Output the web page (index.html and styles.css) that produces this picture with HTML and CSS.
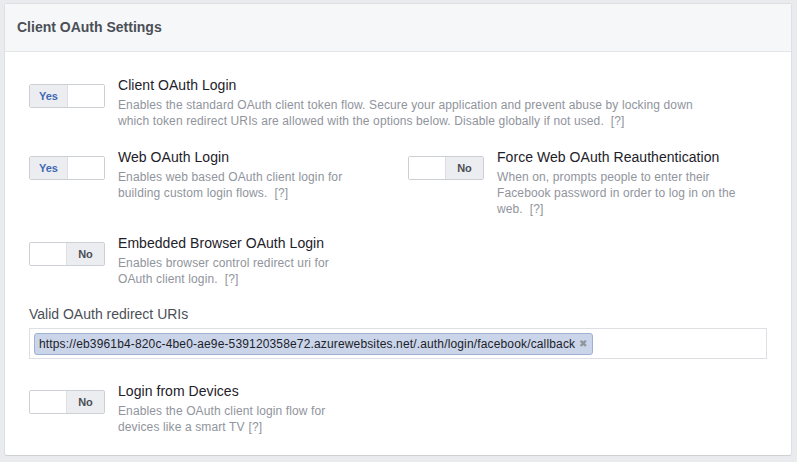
FILE: index.html
```html
<!DOCTYPE html>
<html>
<head>
<meta charset="utf-8">
<link rel="stylesheet" href="styles.css">
</head>
<body>
<div class="card">
  <div class="card-header">Client OAuth Settings</div>
  <div class="card-body">
    <div class="setting">
      <div class="toggle on"><span class="half label">Yes</span><span class="half blank"></span></div>
      <div class="info wide">
        <div class="title">Client OAuth Login</div>
        <div class="desc">Enables the standard OAuth client token flow. Secure your application and prevent abuse by locking down which token redirect URIs are allowed with the options below. Disable globally if not used.<span class="help">[?]</span></div>
      </div>
    </div>

    <div class="pair">
      <div class="setting">
        <div class="toggle on"><span class="half label">Yes</span><span class="half blank"></span></div>
        <div class="info">
          <div class="title">Web OAuth Login</div>
          <div class="desc">Enables web based OAuth client login for building custom login flows.<span class="help">[?]</span></div>
        </div>
      </div>
      <div class="setting">
        <div class="toggle off"><span class="half blank"></span><span class="half label">No</span></div>
        <div class="info">
          <div class="title">Force Web OAuth Reauthentication</div>
          <div class="desc">When on, prompts people to enter their Facebook password in order to log in on the web.<span class="help">[?]</span></div>
        </div>
      </div>
    </div>

    <div class="setting">
      <div class="toggle off"><span class="half blank"></span><span class="half label">No</span></div>
      <div class="info">
        <div class="title">Embedded Browser OAuth Login</div>
        <div class="desc">Enables browser control redirect uri for OAuth client login.<span class="help">[?]</span></div>
      </div>
    </div>

    <div class="field">
      <div class="field-label">Valid OAuth redirect URIs</div>
      <div class="token-input">
        <span class="token">https://eb3961b4-820c-4be0-ae9e-539120358e72.azurewebsites.net/.auth/login/facebook/callback<span class="token-x">&#x2716;</span></span>
      </div>
    </div>

    <div class="setting">
      <div class="toggle off"><span class="half blank"></span><span class="half label">No</span></div>
      <div class="info">
        <div class="title">Login from Devices</div>
        <div class="desc">Enables the OAuth client login flow for devices like a smart TV<span class="help short">[?]</span></div>
      </div>
    </div>
  </div>
</div>
</body>
</html>
```

FILE: styles.css
```css
html, body {
  margin: 0;
  padding: 0;
  background: #e9ebee;
}
body {
  padding: 3px 5px 0 4px;
  font-family: "Liberation Sans", Arial, Helvetica, sans-serif;
}
.card {
  background: #fff;
  border: 1px solid #dddfe2;
  border-bottom-color: #cfd1d5;
  border-radius: 3px;
  height: 451px;
}
.card-header {
  background: #f6f7f9;
  border-bottom: 1px solid #e5e5e5;
  height: 47px;
  line-height: 47px;
  padding: 0 12px;
  font-size: 14px;
  font-weight: bold;
  color: #4b4f56;
}
.card-body {
  padding: 24px 24px 20px 24px;
  display: flex;
  flex-direction: column;
}
.setting {
  display: flex;
  align-items: flex-start;
}
.pair {
  display: grid;
  grid-template-columns: 379px 1fr;
  margin-top: 19px;
}
.pair + .setting {
  margin-top: 17px;
}
.toggle {
  display: flex;
  width: 74px;
  height: 22px;
  border: 1px solid #ccd0d5;
  border-radius: 2px;
  margin-top: 8px;
  margin-right: 13px;
  flex: none;
  overflow: hidden;
}
.half {
  width: 37px;
  height: 22px;
  line-height: 22px;
  text-align: center;
  font-size: 11px;
  font-weight: bold;
}
.half.label {
  background: #ebedf0;
  width: 38px;
}
.half.blank {
  background: #fff;
}
.toggle.on .half.label {
  color: #4267b2;
  border-right: 1px solid #dddfe2;
}
.toggle.off .half.label {
  color: #4b4f56;
  border-left: 1px solid #dddfe2;
}
.info {
  width: 242px;
}
.info.wide {
  width: 590px;
}
.title {
  font-size: 14px;
  line-height: 18px;
  color: #1d2129;
  margin-bottom: 3px;
  letter-spacing: 0.05px;
}
.desc {
  font-size: 12px;
  line-height: 16px;
  color: #90949c;
  letter-spacing: 0.12px;
}
.help {
  margin-left: 7px;
}
.help.short {
  margin-left: 4px;
}
.field {
  margin-top: 18px;
}
.field-label {
  font-size: 14px;
  line-height: 18px;
  color: #4b4f56;
  margin-bottom: 5px;
}
.token-input {
  border: 1px solid #dddfe2;
  width: 738px;
  height: 31px;
  padding: 4px 4px 0 4px;
  box-sizing: border-box;
}
.token {
  display: inline-block;
  height: 20px;
  line-height: 20px;
  background: #cad5ea;
  border: 1px solid #9fb2d5;
  border-radius: 3px;
  padding: 0 5px 0 4px;
  font-size: 12px;
  color: #1d2129;
  white-space: nowrap;
  letter-spacing: 0.15px;
}
.token-x {
  color: #90949c;
  font-size: 10px;
  margin-left: 4px;
  vertical-align: 1px;
}
.field + .setting {
  margin-top: 23px;
}
```
